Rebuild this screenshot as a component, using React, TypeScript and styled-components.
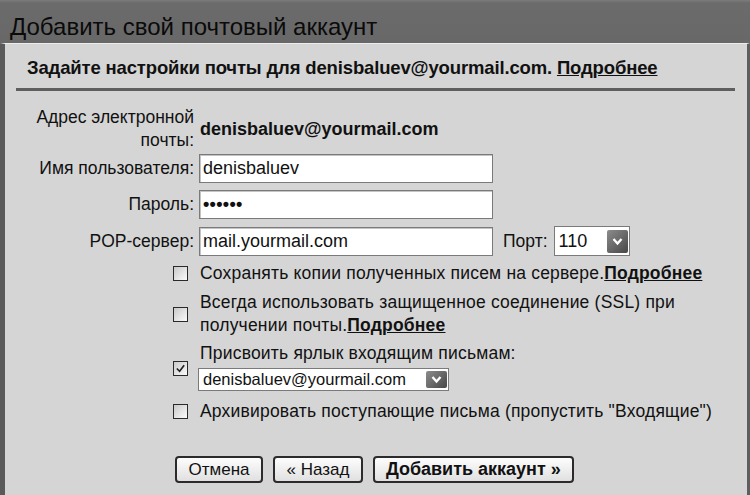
import { createGlobalStyle, styled } from "styled-components";

const GlobalStyle = createGlobalStyle`
  html, body {
    margin: 0;
    padding: 0;
    background: #d5d5d5;
  }
  body {
    font-family: "Liberation Sans", Arial, sans-serif;
    color: #111;
  }
`;

const Page = styled.div`
  width: 750px;
  height: 495px;
  display: flex;
  flex-direction: column;
  overflow: hidden;
`;

//  Dark header bar
const Header = styled.div`
  height: 43px;
  box-sizing: border-box;
  flex-shrink: 0;
  background: linear-gradient(#7c7c7c 0, #6b6b6b 3px, #686868 100%);
  padding: 14px 0 0 10px;
  font-size: 24px;
  line-height: 26px;
  color: #0a0a0a;
`;

//  Light panel with dark left edge
const Panel = styled.div`
  flex: 1;
  background: #d5d5d5;
  border-left: 5px solid #5a5a5a;
  border-right: 3px solid #5e5e5e;
  border-top: 1px solid #ececec;
  padding: 0 12px 0 11px;
  display: flex;
  flex-direction: column;
`;

const Subtitle = styled.div`
  font-size: 18.5px;
  line-height: 22px;
  font-weight: bold;
  letter-spacing: -0.15px;
  padding: 13px 0 9px 11px;
`;

const Link = styled.a`
  color: #111;
  text-decoration: underline;
  font-weight: bold;
  cursor: pointer;
`;

const Divider = styled.div`
  height: 3px;
  background: #5e5e5e;
`;

const Form = styled.div`
  display: grid;
  grid-template-columns: 178px auto;
  column-gap: 5px;
  row-gap: 7px;
  align-items: center;
  margin-top: 15px;
  font-size: 17.5px;
`;

const Label = styled.div<{ $tall?: boolean }>`
  text-align: right;
  line-height: ${(p) => (p.$tall ? 23 : 21)}px;
  margin-bottom: ${(p) => (p.$tall ? -5 : 0)}px;
`;

const Value = styled.div`
  font-weight: bold;
  font-size: 18px;
  padding: 6px 0 0 1px;
`;

const FieldRow = styled.div`
  display: flex;
  align-items: center;
`;

const TextInput = styled.div<{ $width: number }>`
  width: ${(p) => p.$width}px;
  height: 29px;
  box-sizing: border-box;
  background: #fff;
  border: 1px solid #7a7a7a;
  box-shadow: inset 1px 1px 0 #c4c4c4;
  display: flex;
  align-items: center;
  padding-left: 3px;
  font-size: 18px;
`;

const Dots = styled.span`
  font-size: 18px;
  font-weight: bold;
  letter-spacing: 0.3px;
`;

const Select = styled.div<{ $width: number; $height: number; $size: number }>`
  width: ${(p) => p.$width}px;
  height: ${(p) => p.$height}px;
  box-sizing: border-box;
  background: #fff;
  border: 1px solid #7a7a7a;
  display: flex;
  align-items: center;
  justify-content: space-between;
  padding: 0 1px 0 4px;
  font-size: ${(p) => p.$size}px;
`;

const Arrow = styled.div<{ $h: number }>`
  width: 21px;
  height: ${(p) => p.$h}px;
  background: linear-gradient(135deg, #8c8c8c, #474747);
  border-radius: 2px;
  display: flex;
  align-items: center;
  justify-content: center;
`;

const PortLabel = styled.span`
  margin: 0 6px 0 10px;
`;

const Options = styled.div`
  display: flex;
  flex-direction: column;
  gap: 6px;
  margin-top: 6px;
  padding-left: 157px;
  font-size: 17.5px;
  letter-spacing: 0.2px;
`;

const Option = styled.div`
  display: flex;
  align-items: center;
  gap: 12px;
  line-height: 23px;
`;

const Box = styled.div`
  width: 15px;
  height: 15px;
  box-sizing: border-box;
  flex-shrink: 0;
  border: 1px solid #2a2a2a;
  background: linear-gradient(135deg, #c9c9c9, #fbfbfb);
  display: flex;
  align-items: center;
  justify-content: center;
`;

const OptionText = styled.div`
  display: flex;
  flex-direction: column;
`;

const OptionHead = styled.span`
  line-height: 21px;
`;

const LabelSelect = styled.div`
  margin: 4px 0 3px -2px;
  letter-spacing: 0;
`;

const Buttons = styled.div`
  display: flex;
  gap: 10px;
  margin-top: 33px;
  padding-left: 159px;
`;

const Button = styled.button<{ $bold?: boolean }>`
  height: 27px;
  box-sizing: border-box;
  border: 2px solid #2b2b2b;
  border-radius: 4px;
  background: linear-gradient(#fdfdfd, #e0e0e0);
  font-family: "Liberation Sans", Arial, sans-serif;
  font-size: ${(p) => (p.$bold ? 18 : 17)}px;
  font-weight: ${(p) => (p.$bold ? "bold" : "normal")};
  color: #111;
  padding: 0 ${(p) => (p.$bold ? 11 : 11.5)}px;
`;

function Chevron() {
  return (
    <svg width="11" height="9" viewBox="0 0 11 9">
      <path
        d="M1.5 2 L5.5 6.5 L9.5 2"
        fill="none"
        stroke="#fff"
        strokeWidth="2.4"
      />
    </svg>
  );
}

function Check() {
  return (
    <svg width="11" height="11" viewBox="0 0 12 12">
      <path
        d="M2 6 L5 9 L10 2.5"
        fill="none"
        stroke="#222"
        strokeWidth="1.8"
      />
    </svg>
  );
}

function App() {
  return (
    <Page>
      <GlobalStyle />
      <Header>Добавить свой почтовый аккаунт</Header>
      <Panel>
        <Subtitle>
          Задайте настройки почты для denisbaluev@yourmail.com.{" "}
          <Link>Подробнее</Link>
        </Subtitle>
        <Divider />
        <Form>
          <Label $tall>
            Адрес электронной
            <br />
            почты:
          </Label>
          <Value>denisbaluev@yourmail.com</Value>

          <Label>Имя пользователя:</Label>
          <TextInput $width={294}>denisbaluev</TextInput>

          <Label>Пароль:</Label>
          <TextInput $width={294}>
            <Dots>••••••</Dots>
          </TextInput>

          <Label>POP-сервер:</Label>
          <FieldRow>
            <TextInput $width={294}>mail.yourmail.com</TextInput>
            <PortLabel>Порт:</PortLabel>
            <Select $width={76} $height={30} $size={18}>
              110
              <Arrow $h={23}>
                <Chevron />
              </Arrow>
            </Select>
          </FieldRow>
        </Form>
        <Options>
          <Option>
            <Box />
            <OptionText>
              <span>
                Сохранять копии полученных писем на сервере.
                <Link>Подробнее</Link>
              </span>
            </OptionText>
          </Option>
          <Option>
            <Box />
            <OptionText>
              <span>Всегда использовать защищенное соединение (SSL) при</span>
              <span>
                получении почты.<Link>Подробнее</Link>
              </span>
            </OptionText>
          </Option>
          <Option>
            <Box>
              <Check />
            </Box>
            <OptionText>
              <OptionHead>Присвоить ярлык входящим письмам:</OptionHead>
              <LabelSelect>
                <Select $width={251} $height={23} $size={16.5}>
                  denisbaluev@yourmail.com
                  <Arrow $h={17}>
                    <Chevron />
                  </Arrow>
                </Select>
              </LabelSelect>
            </OptionText>
          </Option>
          <Option>
            <Box />
            <OptionText>
              <span>Архивировать поступающие письма (пропустить "Входящие")</span>
            </OptionText>
          </Option>
        </Options>
        <Buttons>
          <Button>Отмена</Button>
          <Button>« Назад</Button>
          <Button $bold>Добавить аккаунт »</Button>
        </Buttons>
      </Panel>
    </Page>
  );
}

export default App;
